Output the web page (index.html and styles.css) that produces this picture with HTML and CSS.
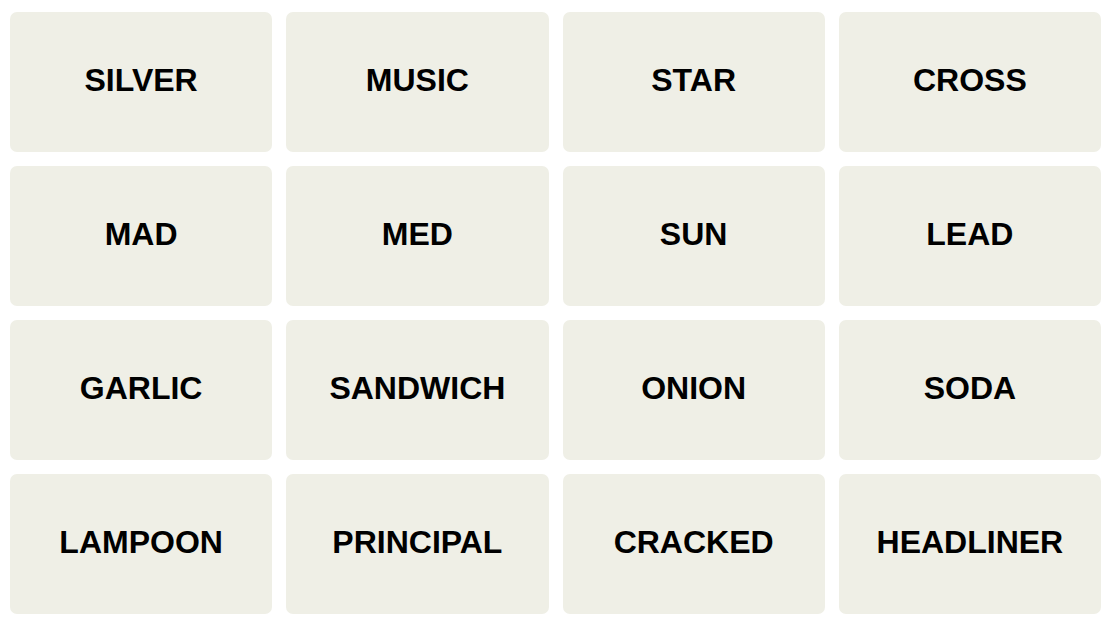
FILE: index.html
```html
<!DOCTYPE html>
<html lang="en">
<head>
  <meta charset="UTF-8" />
  <meta name="viewport" content="width=device-width, initial-scale=1.0"/>
  <title>Connections</title>
  <link rel="stylesheet" href="styles.css">
</head>
<body>

<!-- WORD BOARD -->
<main class="board">
  <button class="tile">SILVER</button>
  <button class="tile">MUSIC</button>
  <button class="tile">STAR</button>
  <button class="tile">CROSS</button>

  <button class="tile">MAD</button>
  <button class="tile">MED</button>
  <button class="tile">SUN</button>
  <button class="tile">LEAD</button>

  <button class="tile">GARLIC</button>
  <button class="tile">SANDWICH</button>
  <button class="tile">ONION</button>
  <button class="tile">SODA</button>

  <button class="tile">LAMPOON</button>
  <button class="tile">PRINCIPAL</button>
  <button class="tile">CRACKED</button>
  <button class="tile">HEADLINER</button>
</main>

</body>
</html>
```

FILE: styles.css
```css
body {
  margin: 0;
  background: #fff;
  font-family: 'Liberation Sans', Arial, sans-serif;
  color: #000;
}

.board {
  display: grid;
  grid-template-columns: repeat(4, 1fr);
  grid-auto-rows: 140px;
  gap: 14px;
  width: 1091px;
  padding: 12px 0 0 10px;
}

.tile {
  display: flex;
  align-items: center;
  justify-content: center;
  padding: 0 0 3px;
  border: 0;
  border-radius: 7px;
  background: #efefe6;
  font-family: inherit;
  font-size: 32px;
  font-weight: 700;
  color: #000;
  text-transform: uppercase;
  cursor: pointer;
}
```
